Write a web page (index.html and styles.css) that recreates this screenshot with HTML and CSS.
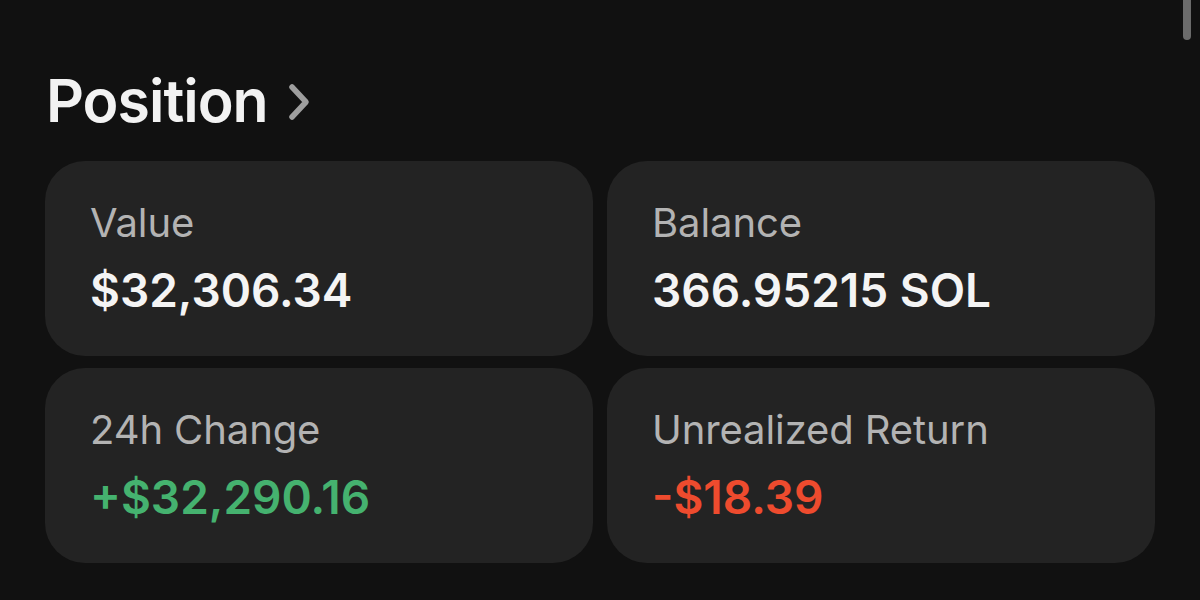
FILE: index.html
```html
<!DOCTYPE html>
<html lang="en">
<head>
    <meta charset="UTF-8">
    <meta name="viewport" content="width=device-width, initial-scale=1.0">
    <title>Position</title>
    <link rel="stylesheet" href="styles.css">
</head>
<body>

    <div class="scroll-thumb"></div>

    <div class="position-section">
        <h2 class="section-title">
            Position
            <svg class="chevron" width="24" height="38" viewBox="0 0 24 38">
                <path d="M5 4 L19 19 L5 34" fill="none" stroke="#9e9e9e" stroke-width="5.5" stroke-linecap="round" stroke-linejoin="round"/>
            </svg>
        </h2>

        <div class="stats-grid">
            <div class="stat-card">
                <div class="stat-label">Value</div>
                <div class="stat-value">$32,306.34</div>
            </div>
            <div class="stat-card">
                <div class="stat-label">Balance</div>
                <div class="stat-value">366.95215 SOL</div>
            </div>
            <div class="stat-card">
                <div class="stat-label">24h Change</div>
                <div class="stat-value positive">+$32,290.16</div>
            </div>
            <div class="stat-card">
                <div class="stat-label">Unrealized Return</div>
                <div class="stat-value negative">-$18.39</div>
            </div>
        </div>
    </div>

</body>
</html>
```

FILE: styles.css
```css
* {
    box-sizing: border-box;
    margin: 0;
    padding: 0;
    font-family: Inter, "Noto Sans", sans-serif;
}

body {
    background: #111111;
    height: 600px;
    overflow: hidden;
}

.scroll-thumb {
    position: absolute;
    top: -6px;
    left: 1183px;
    width: 8px;
    height: 46px;
    border-radius: 4px;
    background: #6b6b6b;
}

.position-section {
    padding: 66px 0 0 45px;
    width: 1155px;
}

.section-title {
    display: flex;
    align-items: center;
    gap: 19px;
    color: #f2f2f2;
    font-size: 59px;
    font-weight: 600;
    letter-spacing: -1px;
    line-height: 70px;
    padding-left: 1px;
    margin-bottom: 25px;
}

.chevron {
    margin-top: 2px;
}

.stats-grid {
    display: grid;
    grid-template-columns: 1fr 1fr;
    grid-auto-rows: 195px;
    column-gap: 14px;
    row-gap: 12px;
}

.stat-card {
    background: #232323;
    border-radius: 40px;
    padding: 38px 0 0 45px;
}

.stat-label {
    color: #b3b3b3;
    font-size: 40px;
    font-weight: 400;
    letter-spacing: -0.1px;
    line-height: 48px;
}

.stat-value {
    color: #f4f4f4;
    font-size: 46px;
    font-weight: 600;
    letter-spacing: 0;
    line-height: 54px;
    margin-top: 16px;
}

.positive {
    color: #45b26f;
}

.negative {
    color: #ee4b2e;
}
```
